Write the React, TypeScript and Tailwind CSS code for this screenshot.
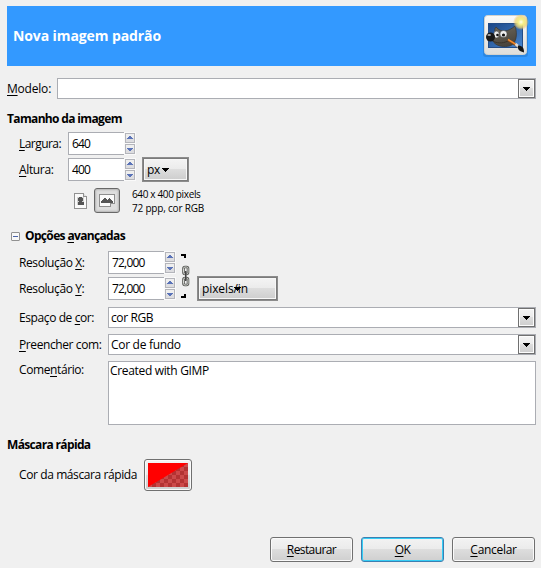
import type { ReactNode } from "react";

const FACE = "bg-[linear-gradient(#f3f3f3_0%,#ebebeb_48%,#dddddd_50%,#cfcfcf_100%)]";

function Down() {
  return (
    <svg width="7" height="4" viewBox="0 0 7 4" shapeRendering="crispEdges" className="shrink-0">
      <path d="M0 0h7v1H6v1H5v1H4v1H3V3H2V2H1V1H0z" fill="#000" />
    </svg>
  );
}

function Combo({ children }: { children?: ReactNode }) {
  return (
    <div className="flex h-[21px] min-w-0 grow items-center border border-[#abadb3] bg-white">
      <span className="grow pl-[2px] leading-[18px]">{children}</span>
      <span className="h-[19px] w-[17px] shrink-0 border border-[#707070] bg-[#fcfcfc] p-px">
        <span className={`flex h-full w-full items-center justify-center ${FACE}`}>
          <Down />
        </span>
      </span>
    </div>
  );
}

function Spin({ value }: { value: string }) {
  return (
    <div className="flex h-[23px] w-[68px] shrink-0">
      <div className="flex w-[56px] items-center border-y border-l border-[#abadb3] bg-white pl-[3px] tracking-[-0.8px]">
        {value}
      </div>
      <svg width="12" height="23" viewBox="0 0 12 23" shapeRendering="crispEdges">
        <path d="M0 0h12v23H0z" fill="#fafafa" />
        <path d="M1.5 1.5h9v9h-9zM1.5 12.5h9v9h-9z" fill="#eeeeee" stroke="#b4b5bb" />
        <path d="M2 6h8v4H2zM2 17h8v4H2z" fill="#dddde0" />
        <path d="M5 4h2v1h1v1h1v1H3V6h1V5h1zM3 16h6v1H8v1H7v1H5v-1H4v-1H3z" fill="#5a73b8" />
      </svg>
    </div>
  );
}

function U({ children }: { children: ReactNode }) {
  return <span className="underline decoration-1 underline-offset-[2px]">{children}</span>;
}

function UnitButton({ className, children }: { className: string; children: ReactNode }) {
  return (
    <div className={`h-[25px] shrink-0 border border-[#8c8c8c] bg-[#f7f7f7] p-[2px] shadow-[inset_0_0_0_1px_#7b7b7b] ${className}`}>
      <div className={`relative flex h-full w-full items-center pl-[2px] ${FACE}`}>{children}</div>
    </div>
  );
}

function DialogButton({ focused, children }: { focused?: boolean; children: ReactNode }) {
  return (
    <button
      className={`flex h-[25px] w-[83px] items-center justify-center rounded-[3px] border ${FACE} ${
        focused
          ? "border-[#3c7fb1] shadow-[inset_0_0_0_1px_#35cdf5]"
          : "border-[#707070] shadow-[inset_0_0_0_1px_#fafafa]"
      }`}
    >
      {children}
    </button>
  );
}

function Wilber() {
  return (
    <svg width="50" height="50" viewBox="0 0 50 50" className="shrink-0">
      <defs>
        <linearGradient id="card" x2="0" y2="1">
          <stop stopColor="#fafaf9" />
          <stop offset="1" stopColor="#dededb" />
        </linearGradient>
        <linearGradient id="canvas" x2="1" y2="1">
          <stop stopColor="#1c4685" />
          <stop offset="1" stopColor="#4786cf" />
        </linearGradient>
        <linearGradient id="fur" x2="0.4" y2="1">
          <stop stopColor="#706a5d" />
          <stop offset="1" stopColor="#4a453c" />
        </linearGradient>
        <radialGradient id="spark">
          <stop stopColor="#ffffed" />
          <stop offset="0.35" stopColor="#f4ef86" />
          <stop offset="0.7" stopColor="#efd571" stopOpacity="0.75" />
          <stop offset="1" stopColor="#f2be62" stopOpacity="0" />
        </radialGradient>
      </defs>
      <rect x="2" y="5" width="45" height="41" rx="3" fill="#2475c5" opacity="0.5" />
      <rect x="3.5" y="4.5" width="42" height="39" rx="3" fill="url(#card)" stroke="#d2d2ce" />
      <rect x="7.5" y="12.5" width="34" height="24" fill="url(#canvas)" stroke="#234c86" />
      <path d="M12 24C16 23 12 19 15 16c5 6 12 5 19-1 2 6 2 12-1 17-3 4-9 4-14 3-4-1-6-3-8-6z" fill="url(#fur)" stroke="#39352e" strokeWidth="0.7" />
      <path d="M12 30c3 2 9 3 15 0" fill="none" stroke="#393329" />
      <ellipse cx="15.5" cy="23.5" rx="2.8" ry="3.4" fill="#eee" stroke="#333" strokeWidth="0.5" />
      <ellipse cx="22.5" cy="23" rx="3.6" ry="3.6" fill="#eee" stroke="#333" strokeWidth="0.5" />
      <circle cx="16.5" cy="24" r="1.3" fill="#111" />
      <circle cx="22.5" cy="24" r="1.6" fill="#111" />
      <circle cx="9.5" cy="26" r="4.5" fill="#191919" />
      <ellipse cx="8.2" cy="24" rx="1.8" ry="1.1" fill="#a5a5a5" />
      <path d="M27 29l11 7" stroke="#7c4517" strokeWidth="2.6" />
      <path d="M27 28.5l10 6.2" stroke="#f58b2c" strokeWidth="1.5" />
      <path d="M34.5 33l3.5 3" stroke="#ddd" strokeWidth="2.5" />
      <path d="M37 34.5c4 0 6 2 6 7-4-1-7-3-6-7z" fill="#141414" />
      <circle cx="40" cy="11" r="8" fill="url(#spark)" />
    </svg>
  );
}

function Portrait() {
  return (
    <svg width="14" height="16" viewBox="0 0 14 16" shapeRendering="crispEdges">
      <path d="M.5.5h9l3 3v12H.5z" fill="#fafafa" stroke="#919191" />
      <path d="M9.5.5v3h3" fill="#ddd" stroke="#919191" />
      <path d="M3 4h7v8H3z" fill="#d4d4d4" />
      <path d="M5 4h3v1h1v3H8v1h2v3H4V9h1V8H4V5h1z" fill="#555" />
    </svg>
  );
}

function Landscape() {
  return (
    <svg width="16" height="13" viewBox="0 0 16 13" shapeRendering="crispEdges">
      <path d="M.5.5h15v8l-4 4H.5z" fill="#fafafa" stroke="#8e8e8e" />
      <path d="M11.5 12.5v-3h4" fill="#ddd" stroke="#8e8e8e" />
      <path d="M2 9V7h1V6h1V5h1V4h2v1h1v1h1V5h1V4h1v1h1v1h1v1h1v2z" fill="#555" />
    </svg>
  );
}

function Chain() {
  return (
    <svg width="9" height="46" viewBox="0 0 9 46" className="mt-[2px]">
      <path d="M0 1h5v4H3V3H0zM0 43h3v-2h2v4H0z" fill="#000" shapeRendering="crispEdges" />
      <g fill="none">
        <rect x="2.5" y="14" width="4.5" height="7" rx="1.5" stroke="#555753" strokeWidth="2.6" />
        <rect x="2.5" y="25" width="4.5" height="7" rx="1.5" stroke="#555753" strokeWidth="2.6" />
        <rect x="2.5" y="14" width="4.5" height="7" rx="1.5" stroke="#d6d7d4" strokeWidth="1" />
        <rect x="2.5" y="25" width="4.5" height="7" rx="1.5" stroke="#d6d7d4" strokeWidth="1" />
        <path d="M4.75 18v10" stroke="#444" strokeWidth="1.5" />
      </g>
    </svg>
  );
}

function ColorSwatch() {
  return (
    <svg width="40" height="24" viewBox="0 0 40 24">
      <defs>
        <pattern id="checks" width="8" height="8" patternUnits="userSpaceOnUse">
          <path d="M0 0h8v8H0z" fill="#cc4a4a" />
          <path d="M0 0h4v4H0zM4 4h4v4H4z" fill="#b33333" />
        </pattern>
      </defs>
      <path d="M0 0h40v24H0z" fill="url(#checks)" />
      <path d="M0 0h40L0 24z" fill="#f00" />
    </svg>
  );
}

export default function App() {
  return (
    <div className="flex h-[568px] w-[541px] flex-col bg-[#f0f0f0] pt-[6px] pr-[5px] pl-[7px] font-['Open_Sans','Noto_Sans',sans-serif] text-[12px] leading-[18px] tracking-[-0.4px] whitespace-nowrap text-black">
      <header className="flex h-[60px] shrink-0 items-center justify-between bg-[#3399ff] pr-[5px] pl-[6px]">
        <h1 className="text-[14px] font-bold tracking-[-0.1px] text-white">Nova imagem padrão</h1>
        <Wilber />
      </header>

      <div className="mt-[12px] flex h-[21px] items-center">
        <span className="w-[50px] tracking-[-0.2px]"><U>M</U>odelo:</span>
        <Combo />
      </div>

      <h2 className="mt-[11px] h-[18px] font-bold tracking-[-0.65px]">Tamanho da imagem</h2>

      <div className="mt-[4px] flex h-[23px] items-center pl-[12px]">
        <span className="w-[49px] tracking-[-0.55px]"><U>L</U>argura:</span>
        <Spin value="640" />
      </div>
      <div className="mt-[2px] flex h-[25px] items-center pl-[12px]">
        <span className="w-[49px] tracking-[-0.35px]"><U>A</U>ltura:</span>
        <Spin value="400" />
        <UnitButton className="ml-[6px] w-[47px]">
          <span className="w-[15px]">px</span>
          <Down />
        </UnitButton>
      </div>
      <div className="mt-[6px] flex h-[25px] items-center pl-[67px]">
        <Portrait />
        <div className="ml-[6px] flex h-[25px] w-[26px] items-center justify-center rounded-[3px] border border-[#686868] bg-[#dedede] shadow-[inset_0_0_2px_1px_#b4b4b4]">
          <Landscape />
        </div>
        <div className="ml-[12px] pt-px text-[10px] leading-[14px]">
          <div className="tracking-[-0.35px]">640 x 400 pixels</div>
          <div className="tracking-[-0.2px]">72 ppp, cor RGB</div>
        </div>
      </div>

      <div className="mt-[14px] flex h-[18px] items-center pl-[4px]">
        <span className="flex h-[9px] w-[9px] items-center justify-center rounded-[1px] border border-[#919191] bg-[#f8f8f8]">
          <span className="h-px w-[5px] bg-[#4b63a7]" />
        </span>
        <h2 className="ml-[5px] font-bold tracking-[-0.65px]">Opções <U>a</U>vançadas</h2>
      </div>

      <div className="mt-[6px] flex h-[50px] pl-[12px]">
        <div className="flex flex-col gap-[3px]">
          <div className="flex h-[23px] items-center">
            <span className="w-[89px]">Resolução <U>X</U>:</span>
            <Spin value="72,000" />
          </div>
          <div className="flex h-[23px] items-center">
            <span className="w-[89px]">Resolução <U>Y</U>:</span>
            <Spin value="72,000" />
          </div>
        </div>
        <div className="ml-[5px]"><Chain /></div>
        <UnitButton className="mt-[25px] ml-[7px] w-[81px]">
          <span className="tracking-[-0.1px]">pixels/in</span>
          <span className="absolute top-[8px] left-[34px] flex"><Down /></span>
        </UnitButton>
      </div>

      <div className="mt-[6px] flex h-[21px] items-center pl-[12px]">
        <span className="w-[89px]">Espaço de <U>c</U>or:</span>
        <Combo>cor RGB</Combo>
      </div>
      <div className="mt-[6px] flex h-[21px] items-center pl-[12px]">
        <span className="w-[89px]"><U>P</U>reencher com:</span>
        <Combo><span className="tracking-[-0.3px]">Cor de fundo</span></Combo>
      </div>
      <div className="mt-[6px] flex h-[64px] pl-[12px]">
        <span className="w-[89px] shrink-0">Come<U>n</U>tário:</span>
        <div className="grow border border-[#abadb3] bg-white pl-px tracking-[-0.33px]">Created with GIMP</div>
      </div>

      <h2 className="mt-[11px] h-[18px] font-bold tracking-[-0.65px]">Máscara rápida</h2>
      <div className="mt-[5px] flex h-[32px] items-center pl-[12px]">
        <span className="w-[125px]">Cor da máscara rápida</span>
        <div className={`flex h-[32px] w-[48px] items-center justify-center rounded-[3px] border border-[#707070] shadow-[inset_0_0_0_1px_#fafafa] ${FACE}`}>
          <ColorSwatch />
        </div>
      </div>

      <footer className="mt-[46px] flex justify-end gap-[8px] pr-px tracking-[-0.6px]">
        <DialogButton><U>R</U>estaurar</DialogButton>
        <DialogButton focused><U>O</U>K</DialogButton>
        <DialogButton><span className="tracking-[-0.3px]"><U>C</U>ancelar</span></DialogButton>
      </footer>
    </div>
  );
}
